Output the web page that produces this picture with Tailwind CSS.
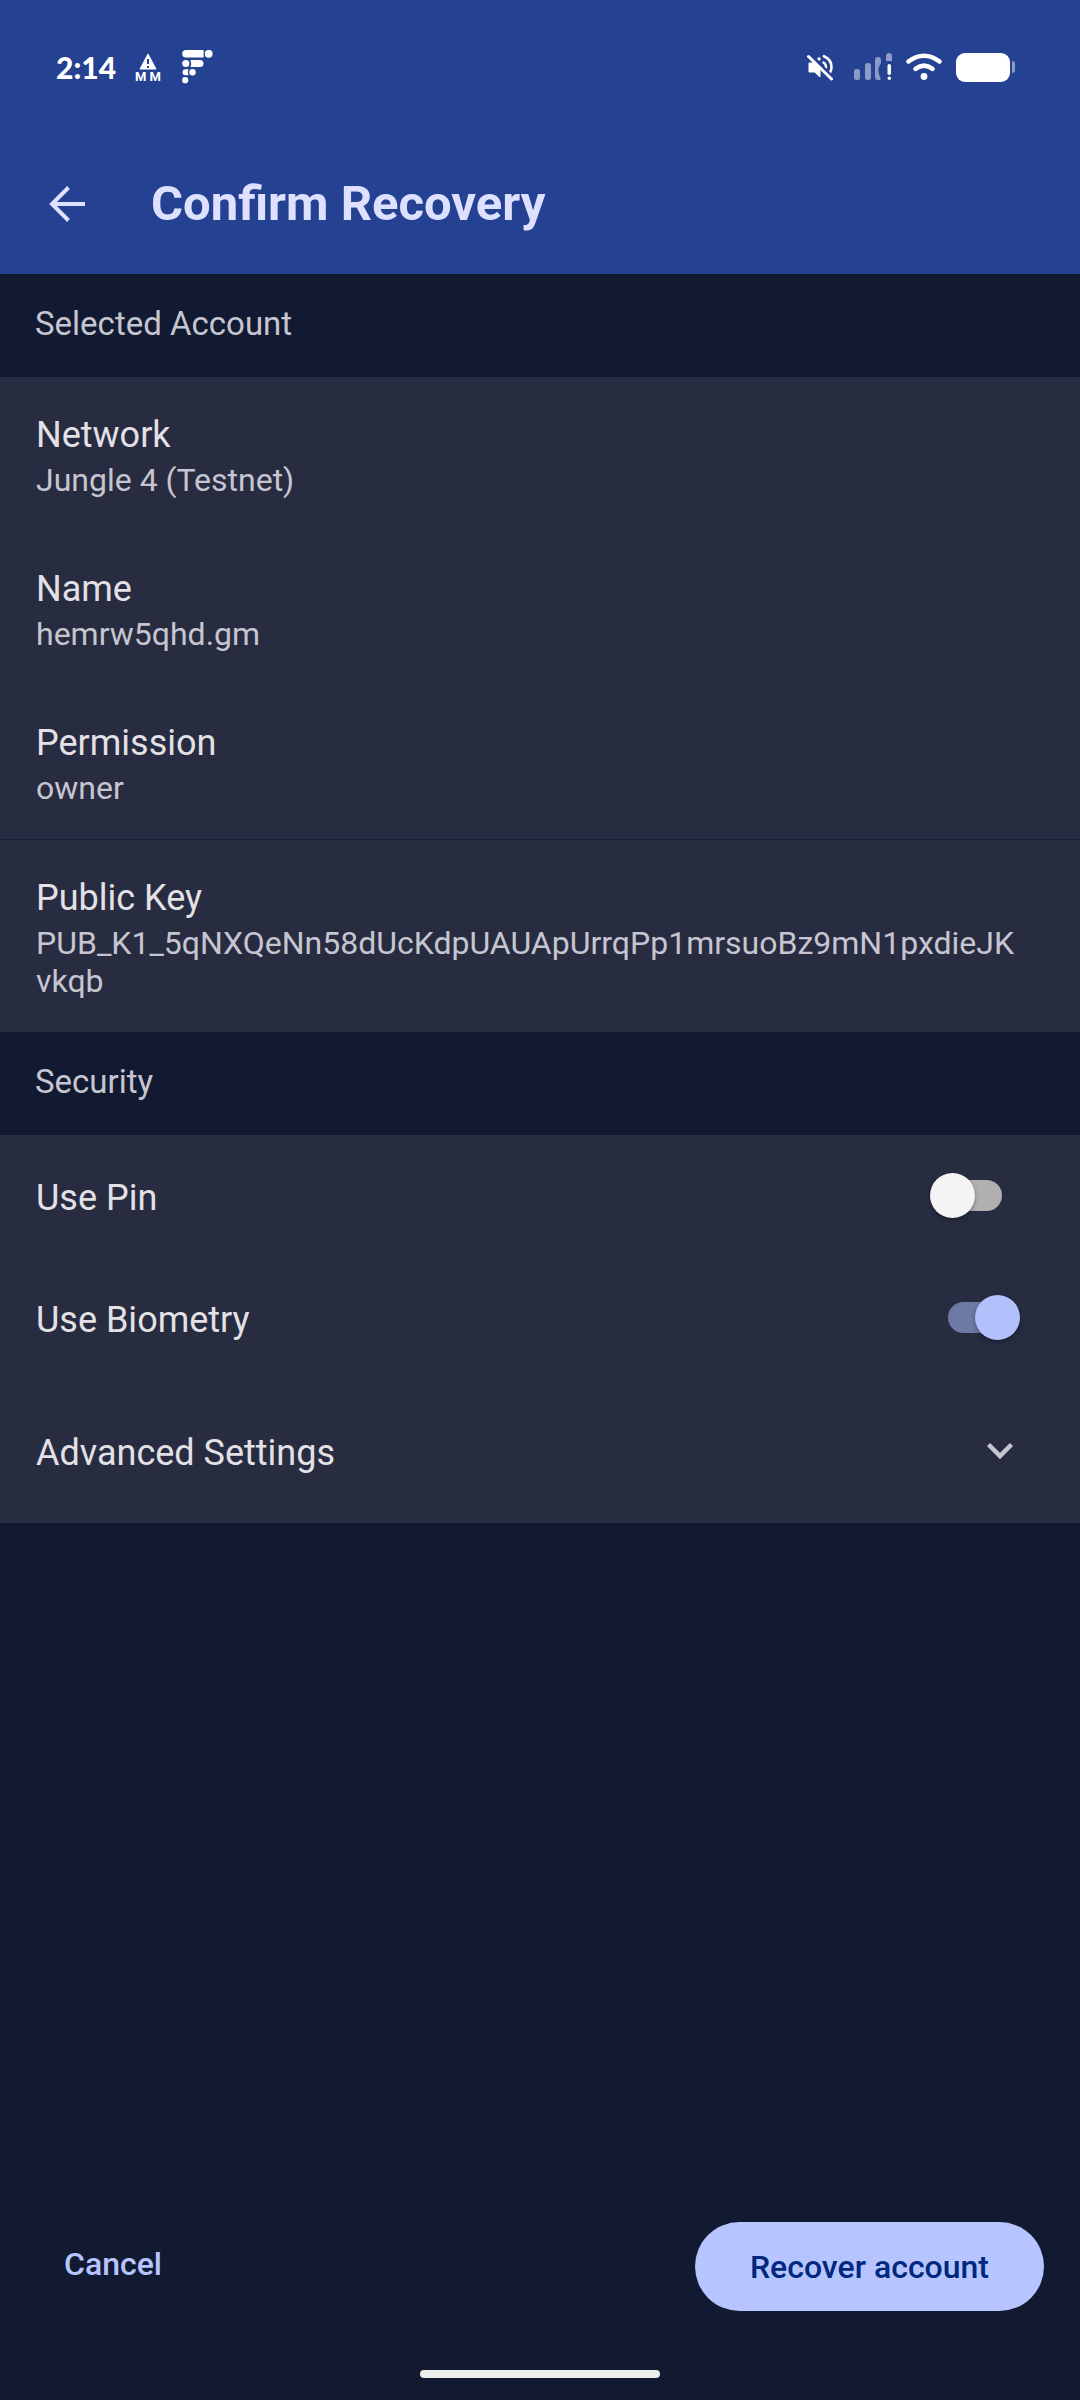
<!DOCTYPE html>
<html lang="en">
<head>
<meta charset="utf-8">
<meta name="viewport" content="width=device-width, initial-scale=1">
<title>Confirm Recovery</title>
<script src="https://cdn.jsdelivr.net/npm/@tailwindcss/browser@4"></script>
</head>
<body class="flex min-h-screen flex-col bg-[#121a32] font-['Roboto',sans-serif] text-[#e4e1e6]">

<header class="bg-[#254191]">
  <!-- Status bar -->
  <div class="flex h-[134px] items-center justify-between pr-[65px] pl-[56px] text-white">
    <div class="flex items-center">
      <span class="w-[80px] font-['Lato',sans-serif] text-[30px] leading-[36px] font-black">2:14</span>
      <span class="flex w-[24px] flex-col items-center gap-[2px]">
        <svg class="h-[17px] w-[18px]" viewBox="0 0 18 17" fill="none" aria-hidden="true">
          <path d="M9 1 17 16H1Z" fill="#fff" stroke="#fff" stroke-linejoin="round"/>
          <path d="M9 6v5M9 13v2" stroke="#254191" stroke-width="2"/>
        </svg>
        <span class="text-[13px] leading-[10px] font-bold whitespace-nowrap">M M</span>
      </span>
      <svg class="ml-[22px] h-[34px] w-[31px]" viewBox="0 0 31 34" fill="#fff" aria-hidden="true">
        <path d="M4 0H20.500Q22.500 0 21.800 2Q21 4 21.800 6Q22.300 7.500 20.500 7.500H4A3.700 3.700 0 0 1 4 0Z"/>
        <circle cx="26.700" cy="3.800" r="3.900"/>
        <circle cx="3.800" cy="13.500" r="3.600"/>
        <path d="M8.500 10H18A3.500 3.500 0 0 1 18 17H8.500Q9.800 13.500 8.500 10Z"/>
        <path d="M3.500 19.300H6.500Q5 22.300 6.500 25.300H3.500A3 3 0 0 1 3.500 19.300Z"/>
        <circle cx="10.500" cy="22.300" r="3.200"/>
        <circle cx="3.200" cy="30.200" r="3.100"/>
      </svg>
    </div>
    <div class="flex items-center">
      <svg class="h-[28px] w-[28px]" viewBox="0 0 28 28" fill="none" stroke="#fff" aria-hidden="true">
        <path d="M3 10H7L14 17V24L8.500 19H3Z" fill="#fff" stroke-linejoin="round"/>
        <path d="M18 3.200Q25.500 6.500 25.500 14Q25.500 17 24 19.500" stroke-width="2.600" stroke-linecap="round"/>
        <path d="M17.500 9.500Q20 11 20 14.500" stroke-width="2.600" stroke-linecap="round"/>
        <path d="M13 4.500V7.500" stroke-width="3"/>
        <path d="M4.500 1.500 28 25" stroke="#254191" stroke-width="2.500"/>
        <path d="M2.500 3.500 25.500 26" stroke-width="3" stroke-linecap="round"/>
      </svg>
      <svg class="ml-[20px] h-[28px] w-[38px]" viewBox="0 0 38 28" aria-hidden="true">
        <g fill="#8c9bc6">
          <rect x="0" y="16" width="6" height="11" rx="2.500"/>
          <rect x="11" y="10" width="6" height="17" rx="2.500"/>
          <path d="M21 7A3 3 0 0 1 27 7V10Q22 17 26.500 25V27H24A3 3 0 0 1 21 24Z"/>
          <path d="M32 8V3A3 3 0 0 1 38 3V8Z"/>
        </g>
        <rect x="33.500" y="11" width="3.500" height="11" rx="1.700" fill="#fff"/>
        <circle cx="35.300" cy="25.300" r="1.700" fill="#fff"/>
      </svg>
      <svg class="ml-[14px] h-[28px] w-[36px]" viewBox="0 0 36 28" fill="none" stroke="#fff" stroke-linecap="round" aria-hidden="true">
        <path d="M2.500 8.500Q18 -3 33.500 8.500" stroke-width="4.600"/>
        <path d="M9.500 15.800Q18 9.500 26.500 15.800" stroke-width="4.600"/>
        <circle cx="18" cy="23.500" r="3.400" fill="#fff" stroke="none"/>
      </svg>
      <div class="ml-[14px] flex items-center gap-[2px]">
        <div class="h-[29px] w-[54px] rounded-[9px] bg-white"></div>
        <div class="h-[12px] w-[3px] rounded-r-[3px] bg-[#8c9bc6]"></div>
      </div>
    </div>
  </div>
  <!-- App bar -->
  <div class="flex h-[140px] items-center pl-[48px]">
    <button type="button" aria-label="Back" class="size-[38px]">
      <svg viewBox="0 0 38 38" fill="none" stroke="#dde1ff" stroke-width="4" aria-hidden="true">
        <path d="M37 19H5M20.500 2.500 4 19 20.500 35.500"/>
      </svg>
    </button>
    <h1 class="ml-[65px] text-[49px] leading-[60px] font-bold text-[#dde1ff]">Confirm Recovery</h1>
  </div>
</header>

<main class="grow">
  <section aria-labelledby="account">
    <h2 id="account" class="flex h-[103px] items-center px-[35px] pb-[3px] text-[33px] leading-[38px] text-[#c6c5d0]">Selected Account</h2>
    <dl class="bg-[#272c41]">
      <div class="px-[36px] pt-[36px] pb-[32px]">
        <dt class="text-[36px] leading-[44px]">Network</dt>
        <dd class="mt-[4px] text-[32px] leading-[38px] text-[#c6c5d0]">Jungle 4 (Testnet)</dd>
      </div>
      <div class="px-[36px] pt-[36px] pb-[32px]">
        <dt class="text-[36px] leading-[44px]">Name</dt>
        <dd class="mt-[4px] text-[32px] leading-[38px] text-[#c6c5d0]">hemrw5qhd.gm</dd>
      </div>
      <div class="px-[36px] pt-[36px] pb-[32px]">
        <dt class="text-[36px] leading-[44px]">Permission</dt>
        <dd class="mt-[4px] text-[32px] leading-[38px] text-[#c6c5d0]">owner</dd>
      </div>
      <div class="border-t border-[#161e35] pt-[36px] pr-[56px] pb-[32px] pl-[36px]">
        <dt class="text-[36px] leading-[44px]">Public Key</dt>
        <dd class="mt-[4px] text-[32px] leading-[38px] break-all text-[#c6c5d0]">PUB_K1_5qNXQeNn58dUcKdpUAUApUrrqPp1mrsuoBz9mN1pxdieJKvkqb</dd>
      </div>
    </dl>
  </section>

  <section aria-labelledby="security">
    <h2 id="security" class="flex h-[103px] items-center px-[35px] pb-[3px] text-[33px] leading-[38px] text-[#c6c5d0]">Security</h2>
    <div class="bg-[#272c41]">
      <label class="flex h-[122px] items-center justify-between pr-[60px] pl-[36px] text-[36px] leading-[44px]">
        <span class="pt-[4px]">Use Pin</span>
        <input type="checkbox" role="switch" class="relative h-[46px] w-[90px] appearance-none before:absolute before:top-[7px] before:left-[18px] before:h-[31px] before:w-[54px] before:rounded-full before:bg-[#b2afb1] after:absolute after:top-0 after:left-0 after:size-[45px] after:rounded-full after:bg-[#f4f4f4] after:shadow-[0_2px_4px_rgb(0_0_0/0.35)] checked:before:bg-[#6e7aa3] checked:after:left-[45px] checked:after:bg-[#b2c0fb]">
      </label>
      <label class="flex h-[122px] items-center justify-between pr-[60px] pl-[36px] text-[36px] leading-[44px]">
        <span class="pt-[4px]">Use Biometry</span>
        <input type="checkbox" role="switch" checked class="relative h-[46px] w-[90px] appearance-none before:absolute before:top-[7px] before:left-[18px] before:h-[31px] before:w-[54px] before:rounded-full before:bg-[#b2afb1] after:absolute after:top-0 after:left-0 after:size-[45px] after:rounded-full after:bg-[#f4f4f4] after:shadow-[0_2px_4px_rgb(0_0_0/0.35)] checked:before:bg-[#6e7aa3] checked:after:left-[45px] checked:after:bg-[#b2c0fb]">
      </label>
      <button type="button" aria-expanded="false" class="flex h-[144px] w-full items-center justify-between pr-[66px] pl-[36px] text-left text-[36px] leading-[44px]">
        <span class="pt-[4px]">Advanced Settings</span>
        <svg class="h-[18px] w-[28px]" viewBox="0 0 28 18" fill="none" stroke="#c6c5d0" stroke-width="4.500" aria-hidden="true">
          <path d="M2.500 2.500 14 14 25.500 2.500"/>
        </svg>
      </button>
    </div>
  </section>
</main>

<footer>
  <div class="flex items-start justify-between px-[36px]">
    <button type="button" class="h-[84px] rounded-full px-[28px] text-[32px] leading-[38px] font-medium text-[#b6c4ff]">Cancel</button>
    <button type="button" class="h-[89px] rounded-full bg-[#b6c4ff] px-[55px] text-[32px] leading-[38px] font-medium text-[#00287e]">Recover account</button>
  </div>
  <div class="flex h-[89px] items-end justify-center pb-[22px]">
    <div class="h-[8px] w-[240px] rounded-full bg-[#eceeee]"></div>
  </div>
</footer>

</body>
</html>
